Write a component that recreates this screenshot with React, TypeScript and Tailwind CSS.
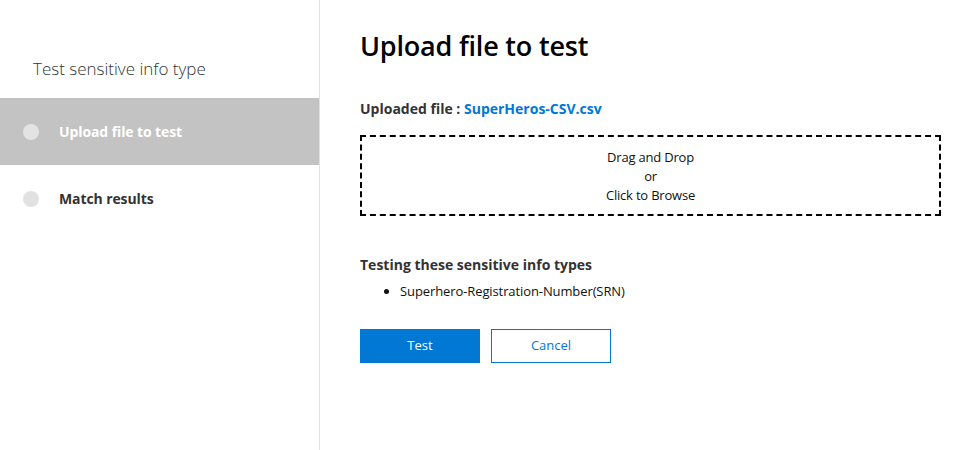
export default function App() {
  return (
    <div className="flex h-[450px] w-[972px] bg-white" style={{ fontFamily: '"Open Sans", "Noto Sans", sans-serif' }}>
      <aside className="w-[320px] shrink-0 border-r border-[#e1e1e1] pt-[56px]">
        <div className="pl-[33px] text-[17px] font-light leading-[26px] text-[#333]">Test sensitive info type</div>
        <div className="mt-[16px] flex h-[67px] items-center bg-[#c3c3c3] pl-[23px]">
          <span className="h-[16px] w-[16px] rounded-full bg-[#e3e3e3]" />
          <span className="ml-[20px] text-[14px] font-bold tracking-[-0.1px] text-white">Upload file to test</span>
        </div>
        <div className="flex h-[67px] items-center pl-[23px]">
          <span className="h-[16px] w-[16px] rounded-full bg-[#e1e1e1]" />
          <span className="ml-[20px] text-[14px] font-bold tracking-[-0.1px] text-[#333]">Match results</span>
        </div>
      </aside>
      <main className="flex-1 pl-[40px] pr-[31px] pt-[28px]">
        <h1 className="text-[27px] font-semibold leading-[36px] tracking-[-0.2px] text-black">Upload file to test</h1>
        <div className="mt-[35px] text-[14px] font-bold leading-[20px] text-[#333]">
          Uploaded file : <span className="text-[#0078d4]">SuperHeros-CSV.csv</span>
        </div>
        <div className="mt-[16px] flex h-[81px] flex-col items-center justify-center border-2 border-dashed border-black pt-[2px] text-[13px] leading-[19px] tracking-[-0.2px] text-[#111]">
          <div>Drag and Drop</div>
          <div>or</div>
          <div>Click to Browse</div>
        </div>
        <div className="mt-[39px] text-[14px] font-bold leading-[20px] text-[#333]">Testing these sensitive info types</div>
        <ul className="mt-[7px] list-disc pl-[40px] text-[13px] leading-[19px] tracking-[-0.1px] text-[#111]">
          <li>Superhero-Registration-Number(SRN)</li>
        </ul>
        <div className="mt-[28px] flex gap-[11px]">
          <button className="h-[34px] w-[120px] bg-[#0078d4] text-[13px] text-white">Test</button>
          <button className="h-[34px] w-[120px] border border-[#0078d4] bg-white text-[13px] text-[#0078d4]">Cancel</button>
        </div>
      </main>
    </div>
  );
}
